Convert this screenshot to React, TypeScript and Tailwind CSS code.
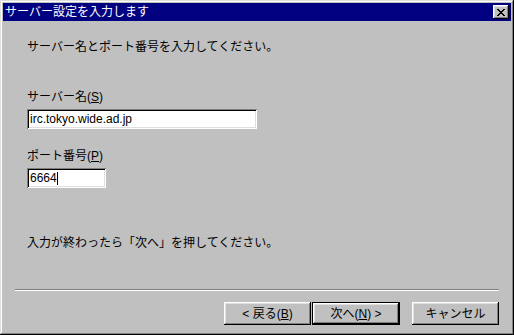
import React from 'react';

const font = { fontFamily: '"Liberation Sans", "Noto Sans CJK JP", sans-serif' };

// classic 3D bevel helpers
const raised =
  'shadow-[inset_-1px_-1px_#000,inset_1px_1px_#fff,inset_-2px_-2px_#808080,inset_2px_2px_#dfdfdf]';
const sunken =
  'shadow-[inset_1px_1px_#808080,inset_-1px_-1px_#fff,inset_2px_2px_#000,inset_-2px_-2px_#dfdfdf]';

const WizButton = ({ children, isDefault }: { children: React.ReactNode; isDefault?: boolean }) => {
  if (isDefault) {
    return (
      <div className="w-[88px] h-[23px] border border-black">
        <div className={`w-full h-full bg-[#c0c0c0] ${raised} flex items-center justify-center text-[12px] leading-[14px] text-black`}>
          {children}
        </div>
      </div>
    );
  }
  return (
    <div className={`w-[87px] h-[23px] bg-[#c0c0c0] ${raised} flex items-center justify-center text-[12px] leading-[14px] text-black`}>
      {children}
    </div>
  );
};

const CloseGlyph = () => (
  <svg width="8" height="7" viewBox="0 0 8 7" shapeRendering="crispEdges">
    <path
      fill="#000"
      d="M0 0h2v1h-2zM6 0h2v1h-2zM1 1h2v1h-2zM5 1h2v1h-2zM2 2h4v1h-4zM3 3h2v1h-2zM2 4h4v1h-4zM1 5h2v1h-2zM5 5h2v1h-2zM0 6h2v1h-2zM6 6h2v1h-2z"
    />
  </svg>
);

export default function App() {
  return (
    <div
      style={font}
      className="w-[514px] h-[335px] bg-[#c0c0c0] p-[3px] flex flex-col shadow-[inset_-1px_-1px_#000,inset_1px_1px_#dfdfdf,inset_-2px_-2px_#808080,inset_2px_2px_#fff]"
    >
      {/* Title bar */}
      <div className="h-[18px] bg-[#000080] flex items-center justify-between pl-[2px] pr-[2px]">
        <span className="text-white text-[12px] leading-[14px]">サーバー設定を入力します</span>
        <div className={`w-[16px] h-[14px] bg-[#c0c0c0] ${raised} flex items-center justify-center`}>
          <CloseGlyph />
        </div>
      </div>

      {/* Body */}
      <div className="flex flex-col text-black text-[12px] leading-[14px]">
        <p className="ml-[24px] mt-[19px] h-[14px]">サーバー名とポート番号を入力してください。</p>

        <p className="ml-[24px] mt-[36px] h-[14px]">
          サーバー名(<span className="underline">S</span>)
        </p>
        <div className={`ml-[24px] mt-[5px] w-[230px] h-[20px] bg-white ${sunken} flex items-center pl-[3px]`}>
          <span>irc.tokyo.wide.ad.jp</span>
        </div>

        <p className="ml-[24px] mt-[20px] h-[14px]">
          ポート番号(<span className="underline">P</span>)
        </p>
        <div className={`ml-[24px] mt-[5px] w-[79px] h-[20px] bg-white ${sunken} flex items-center pl-[3px]`}>
          <span>6664</span>
          <span className="w-px h-[13px] bg-black" />
        </div>

        <p className="ml-[24px] mt-[48px] h-[14px]">入力が終わったら「次へ」を押してください。</p>

        {/* Separator */}
        <div className="ml-[12px] mt-[39px] w-[484px] h-[2px] border-t border-t-[#808080] border-b border-b-white" />

        {/* Buttons */}
        <div className="mt-[11px] mr-[12px] flex justify-end">
          <WizButton>
            &lt; 戻る(<span className="underline">B</span>)
          </WizButton>
          <div className="ml-[1px]">
            <WizButton isDefault>
              次へ(<span className="underline">N</span>) &gt;
            </WizButton>
          </div>
          <div className="ml-[12px]">
            <WizButton>キャンセル</WizButton>
          </div>
        </div>
      </div>
    </div>
  );
}
